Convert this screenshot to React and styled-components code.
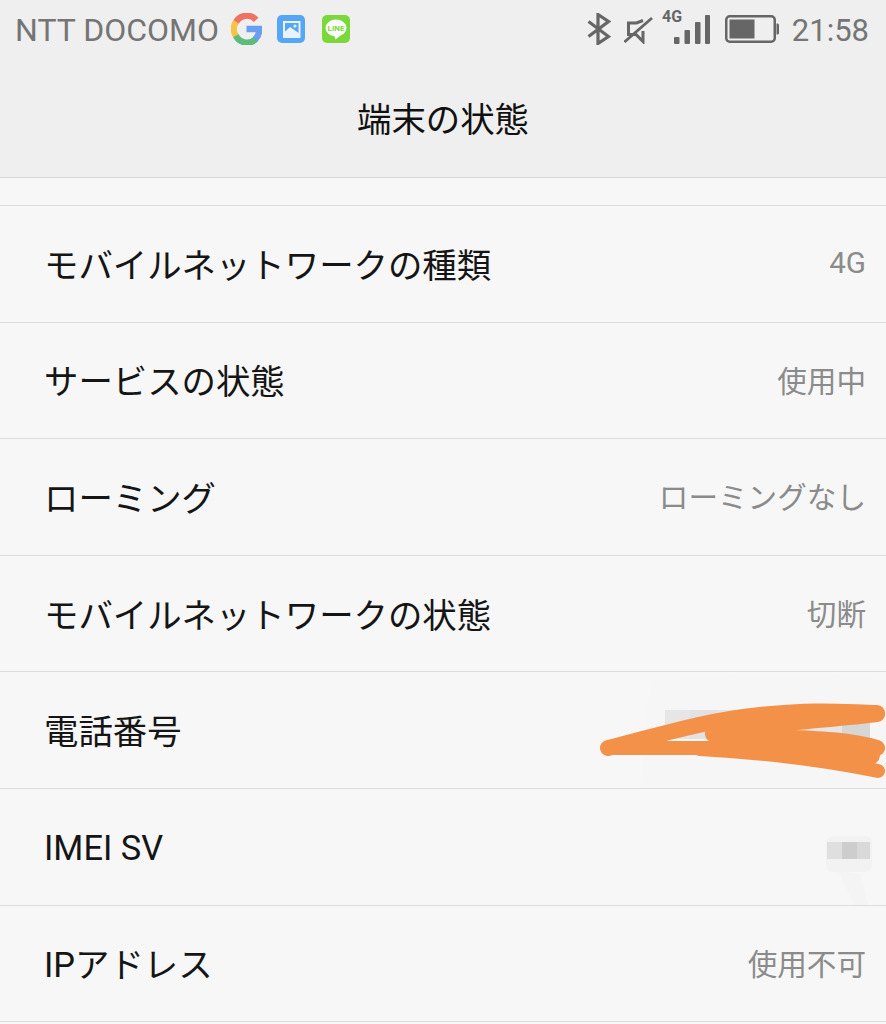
import React from "react";
import styled, { createGlobalStyle } from "styled-components";

const Global = createGlobalStyle`
  html, body { margin: 0; padding: 0; background: #f7f7f7; }
  body { font-family: Roboto, "Noto Sans CJK JP", sans-serif; }
`;
const Page = styled.div`
  width: 886px;
  height: 1024px;
  overflow: hidden;
  background: #f7f7f7;
`;
const Header = styled.header`
  height: 177px;
  background: #efefef;
  border-bottom: 1px solid #d6d6d6;
`;
const StatusBar = styled.div`
  height: 58px;
  display: flex;
  align-items: center;
  justify-content: space-between;
  padding: 0 17px 0 15px;
  color: #757575;
`;
const StatusGroup = styled.div`
  display: flex;
  align-items: center;
  gap: ${(p) => p.$gap}px;
`;
const Carrier = styled.span`
  font-size: 32px;
  margin-right: -3px;
  margin-top: 2px;
`;
const Clock = styled.span`
  font-size: 31px;
  margin-top: 2px;
`;
const TitleBar = styled.div`
  height: 119px;
  padding-bottom: 2px;
  box-sizing: border-box;
  display: flex;
  align-items: center;
  justify-content: center;
  font-size: 34.4px;
  color: #111;
`;
const Spacer = styled.div`
  height: 27px;
  border-bottom: 1px solid #dcdcdc;
`;
const Row = styled.div`
  position: relative;
  box-sizing: border-box;
  height: 116.6px;
  padding: 0 20px 2px 44px;
  display: flex;
  align-items: center;
  justify-content: space-between;
  border-bottom: 1px solid #dcdcdc;
`;
const Label = styled.span`
  font-size: 34.4px;
  color: #151515;
  margin-top: ${(p) => (p.$latin ? 4 : 0)}px;
`;
const Value = styled.span`
  font-size: 29.6px;
  color: #8b8b8b;
`;
const Overlay = styled.svg`
  position: absolute;
  right: 0;
  top: 0;
`;
const SignalFrame = styled.svg`
  margin: -2px 2px 0 -4px;
`;

const rows = [
  ["モバイルネットワークの種類", "4G"],
  ["サービスの状態", "使用中"],
  ["ローミング", "ローミングなし"],
  ["モバイルネットワークの状態", "切断"],
  ["電話番号", null, "phone"],
  ["IMEI SV", null, "imei", true],
  ["IPアドレス", "使用不可"],
];

const GoogleIcon = () => (
  <svg width="31" height="32" viewBox="0 0 32 32" fill="none" strokeWidth="6.5">
    <path d="M26 6.500A13 13 0 0 0 5 9" stroke="#ee7364" />
    <path d="M5.300 8.500a13 13 0 0 0 0 15" stroke="#f6c344" />
    <path d="M5 23a13 13 0 0 0 21 3" stroke="#5dbb7b" />
    <path d="M16 16h13a13 13 0 0 1-4 10.500" stroke="#6a9ff0" />
  </svg>
);
const PhotoIcon = () => (
  <svg width="30" height="28" viewBox="0 0 30 28">
    <rect width="28" height="28" rx="5" fill="#55a6f5" />
    <rect x="7" y="7" width="15.500" height="15" fill="none" stroke="#e8f3fe" strokeWidth="2" />
    <path d="M7 17.500l6-5.500 9.500 6.500v3.500H7z" fill="#e8f3fe" />
    <circle cx="18" cy="11" r="1.600" fill="#e8f3fe" />
  </svg>
);
const LineIcon = () => (
  <svg width="28" height="28" viewBox="0 0 28 28">
    <rect width="28" height="28" rx="5" fill="#7ad83a" />
    <ellipse cx="14" cy="13" rx="10.500" ry="8.500" fill="#fff" />
    <path d="M12 20l1.500 4.500 5.500-4.500z" fill="#fff" />
    <text x="14" y="15.800" textAnchor="middle" fontSize="8" fontWeight="700" fontFamily="Roboto, sans-serif" fill="#7ad83a">LINE</text>
  </svg>
);
const Bluetooth = () => (
  <svg width="24" height="32" viewBox="0 0 24 32" fill="none" stroke="#666" strokeWidth="3.200">
    <path d="M1.500 8.500l20 15L11 30.500V1.500l10.500 7L1.500 23.500" />
  </svg>
);
const Mute = () => (
  <svg width="29" height="30" viewBox="0 0 29 30" fill="none" stroke="#666">
    <path d="M19 6.500L12.500 9H4.500v11.500H12l7 7V17" strokeWidth="3" />
    <path d="M0.500 28L28 4" strokeWidth="2.800" />
  </svg>
);
const Signal = () => (
  <SignalFrame width="48" height="44" viewBox="0 0 48 44">
    <text x="0" y="16" fontSize="16" fontWeight="700" fontFamily="Roboto, sans-serif" fill="#666">4G</text>
    <rect x="12" y="31" width="5.500" height="7" rx="1" fill="#666" />
    <rect x="22.500" y="24" width="5.500" height="14" rx="1" fill="#666" />
    <rect x="33" y="16" width="5.500" height="22" rx="1" fill="#666" />
    <rect x="43" y="9" width="5" height="29" rx="1" fill="#666" />
  </SignalFrame>
);
const Battery = () => (
  <svg width="54" height="28" viewBox="0 0 54 28">
    <rect x="1.250" y="1.250" width="48.500" height="25.500" rx="3.500" fill="none" stroke="#666" strokeWidth="2.500" />
    <rect x="4.500" y="4.500" width="25" height="19" fill="#666" />
    <path d="M51.500 8.500h1a1.500 1.500 0 0 1 1.500 1.500v8a1.500 1.500 0 0 1-1.500 1.500h-1z" fill="#666" />
  </svg>
);

const PhoneMask = () => (
  <Overlay width="306" height="116" viewBox="580 671 306 116" aria-hidden="true">
    <path d="M650 680L760 672 820 672 886 680V786H640z" fill="#f6f6f6" />
    <rect x="665" y="709" width="205" height="29" fill="#e6e6e6" />
    <rect x="690" y="709" width="28" height="29" fill="#e2e2e2" />
    <rect x="842" y="709" width="28" height="29" fill="#d6d6d6" />
    <g fill="none" stroke="#f49149" strokeLinecap="round" strokeLinejoin="round">
      <path d="M608 747C650 737 700 720 760 714S840 711 877 712" strokeWidth="16" />
      <path d="M877 713C830 719 760 722 713 733L780 736C820 738 850 739 877 747" strokeWidth="16" />
      <path d="M877 747L608 747" strokeWidth="14" />
      <path d="M700 748C770 752 830 760 878 770" strokeWidth="14" />
      <path d="M720 742L870 754" strokeWidth="20" />
    </g>
  </Overlay>
);
const ImeiMask = () => (
  <Overlay width="80" height="116" viewBox="806 788 80 116" aria-hidden="true">
    <rect x="826" y="835" width="46" height="36" rx="7" fill="#f2f2f2" />
    <path d="M838 870l22 3 8 31h-14z" fill="#f4f4f4" />
    <rect x="827" y="841" width="15" height="17" fill="#dfdfdf" />
    <rect x="842" y="841" width="15" height="17" fill="#cdcdcd" />
    <rect x="857" y="841" width="13" height="17" fill="#d9d9d9" />
  </Overlay>
);

export default function App() {
  return (
    <Page>
      <Global />
      <Header>
        <StatusBar>
          <StatusGroup $gap={15}>
            <Carrier>NTT DOCOMO</Carrier>
            <GoogleIcon />
            <PhotoIcon />
            <LineIcon />
          </StatusGroup>
          <StatusGroup $gap={13}>
            <Bluetooth />
            <Mute />
            <Signal />
            <Battery />
            <Clock>21:58</Clock>
          </StatusGroup>
        </StatusBar>
        <TitleBar>端末の状態</TitleBar>
      </Header>
      <Spacer />
      {rows.map(([label, value, mask, latin]) => (
        <Row key={label}>
          <Label $latin={latin}>{label}</Label>
          {value && <Value>{value}</Value>}
          {mask === "phone" && <PhoneMask />}
          {mask === "imei" && <ImeiMask />}
        </Row>
      ))}
    </Page>
  );
}
